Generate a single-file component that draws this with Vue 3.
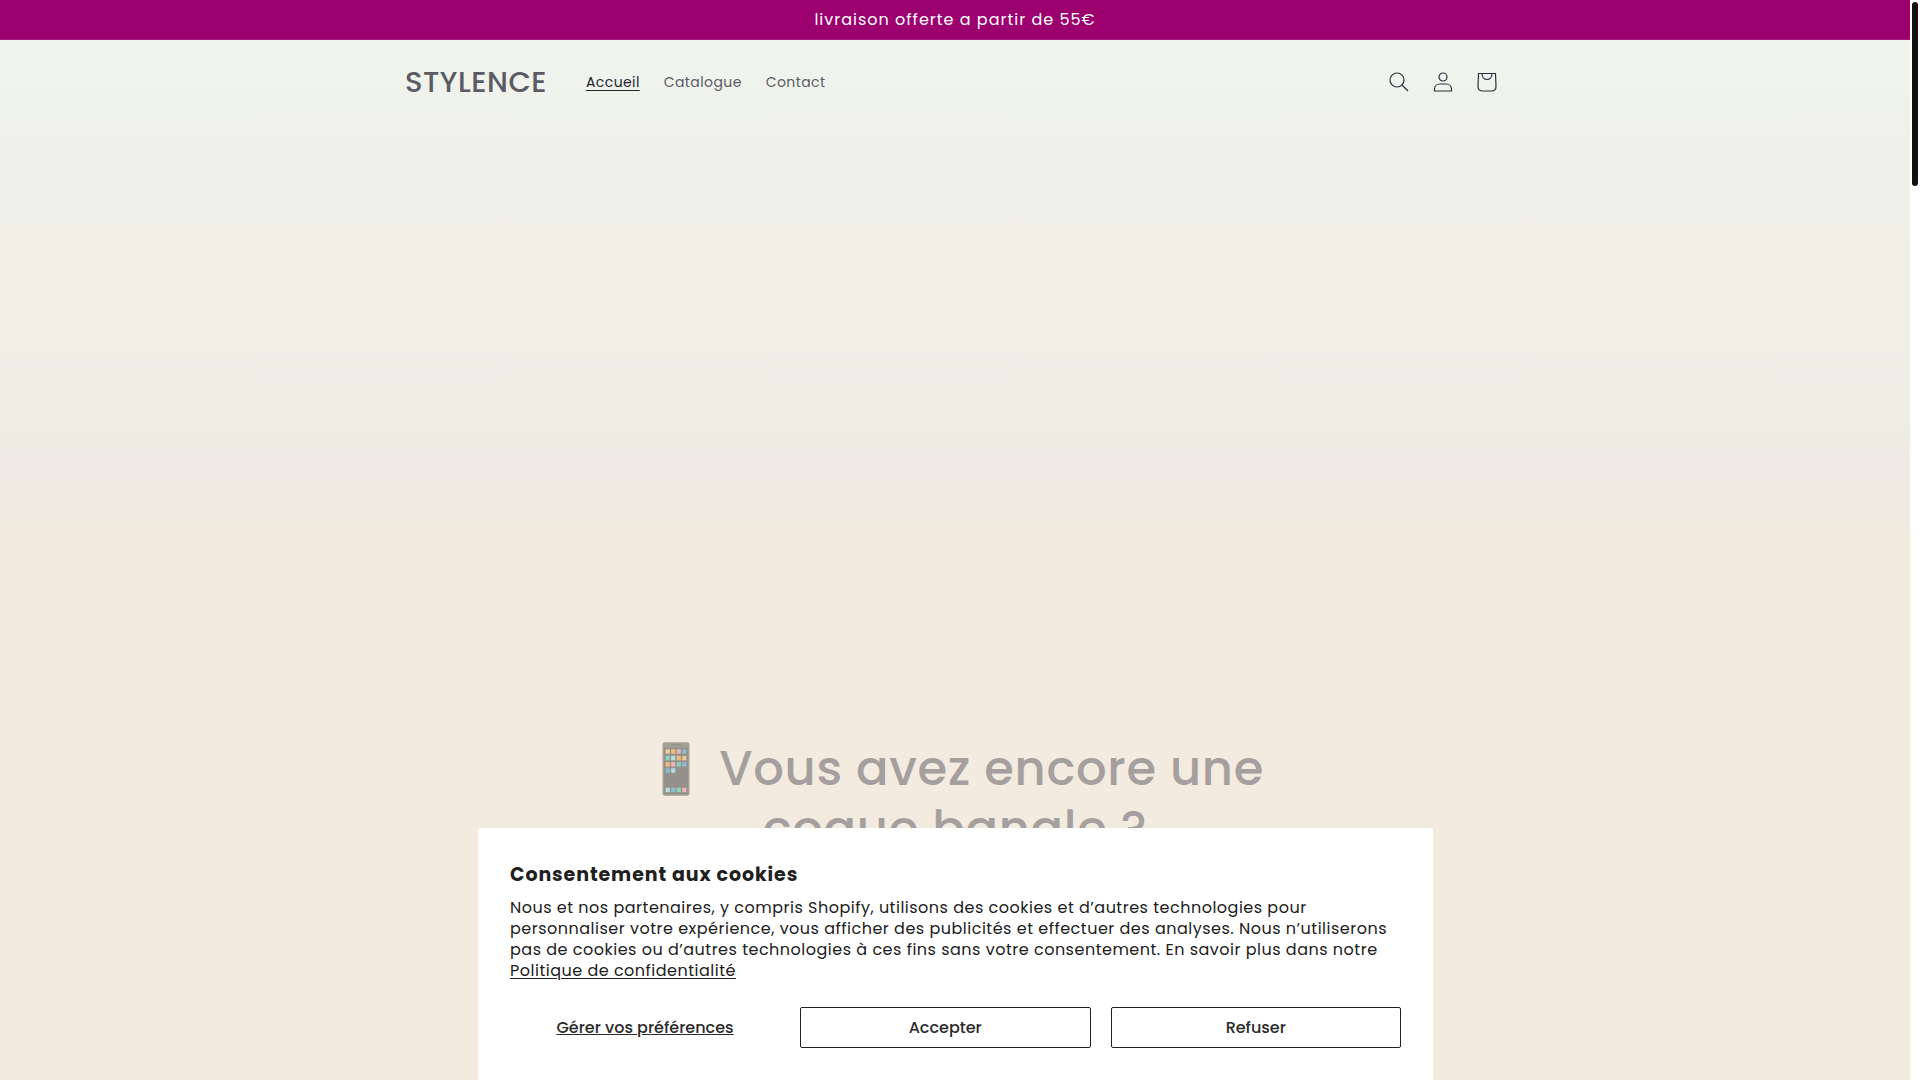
<script setup>
const navLinks = [
  { label: 'Accueil', active: true },
  { label: 'Catalogue', active: false },
  { label: 'Contact', active: false },
]
const appTiles = [
  ['#e9cba0', 10, 21], ['#f2bd78', 26, 21], ['#efb3bd', 42, 21], ['#8bbdd3', 58, 21],
  ['#8bd3bd', 10, 40], ['#b9dbe3', 26, 40], ['#f2bd78', 42, 40], ['#e9cba0', 58, 40],
  ['#f2bd78', 10, 58], ['#efb3bd', 26, 58], ['#8bd3bd', 42, 58], ['#8bbdd3', 58, 58],
  ['#8bbdd3', 10, 76], ['#b9dbe3', 26, 76],
  ['#b9dbe3', 10, 132], ['#8bbdd3', 26, 132], ['#8bd3bd', 42, 132], ['#efb3bd', 58, 132],
]
</script>

<template>
  <div class="page">
    <div class="announcement">
      <p>livraison offerte a partir de 55€</p>
    </div>

    <header class="header">
      <a href="#" class="logo">STYLENCE</a>
      <nav class="nav">
        <a v-for="l in navLinks" :key="l.label" href="#" :class="{ active: l.active }">{{ l.label }}</a>
      </nav>
      <div class="icons">
        <button type="button" aria-label="Recherche">
          <svg viewBox="0 0 20 20" width="20" height="20">
            <circle cx="8" cy="8" r="7" />
            <path d="M13 13l6 6" />
          </svg>
        </button>
        <a href="#" aria-label="Connexion">
          <svg viewBox="0 0 20 20" width="20" height="20">
            <circle cx="10" cy="5" r="4" />
            <path d="M1.500 19v-2c0-3 2.300-5 5.500-5h6c3.200 0 5.500 2 5.500 5v2z" />
          </svg>
        </a>
        <a href="#" aria-label="Panier">
          <svg viewBox="0 0 20 20" width="20" height="20">
            <path d="M1.500 1.500h17l.5 13c0 3-2 4.500-4.500 4.500h-9C3 19 1 17.500 1 14.500z" />
            <path d="M5 1.500c0 3.500 2 6 5 6s5-2.500 5-6" />
          </svg>
        </a>
      </div>
    </header>

    <main class="hero">
      <h1>
        <svg class="phone" viewBox="0 0 80 156" role="img" aria-label="Téléphone">
          <rect x="1" y="1" width="78" height="154" rx="6" fill="#a3a097" />
          <rect x="5" y="17" width="70" height="134" fill="#94918a" />
          <rect x="26" y="6" width="28" height="4" rx="2" fill="#94918a" />
          <rect v-for="(t, i) in appTiles" :key="i" :x="t[1]" :y="t[2]" width="12" height="13" :fill="t[0]" />
        </svg>
        Vous avez encore une<br />coque banale ?
      </h1>
    </main>

    <section class="consent" role="dialog" aria-labelledby="consent-title">
      <h2 id="consent-title">Consentement aux cookies</h2>
      <p>
        Nous et nos partenaires, y compris Shopify, utilisons des cookies et d’autres technologies pour
        personnaliser votre expérience, vous afficher des publicités et effectuer des analyses. Nous n’utiliserons
        pas de cookies ou d’autres technologies à ces fins sans votre consentement. En savoir plus dans notre
        <a href="#">Politique de confidentialité</a>
      </p>
      <div class="actions">
        <button type="button" class="manage">Gérer vos préférences</button>
        <button type="button">Accepter</button>
        <button type="button">Refuser</button>
      </div>
    </section>

    <div class="scrollbar"><div class="thumb"></div></div>
  </div>
</template>

<style>
html {
  font-size: 10px;
}
body {
  overflow: hidden;
}
</style>

<style scoped>
.page {
  --ink: #202020;
  --track-body: 0.05rem;
  --track-heading: 0.07rem;
  min-height: 100vh;
  padding-right: 10px;
  box-sizing: border-box;
  background: linear-gradient(
    180deg,
    #eff5ee 40px,
    #eff0e8 160px,
    #f0efe6 300px,
    #efebe4 480px,
    #efebe0 484px,
    #f0ebe0 526px,
    #f3eae0 532px
  );
  font-family: Poppins, Inter, sans-serif;
  color: #5b5a65;
}
.announcement {
  height: 39px;
  background: #9b006e;
  border-bottom: 1px solid #a31a7c;
  display: flex;
  align-items: center;
  justify-content: center;
  color: #fff;
}
.announcement p {
  margin: 0;
  font-size: 16px;
  letter-spacing: 1px;
}
.header {
  max-width: 1100px;
  height: 84px;
  margin: 0 auto;
  display: flex;
  align-items: center;
}
.logo {
  font-size: 29px;
  font-weight: 500;
  letter-spacing: var(--track-body);
  color: inherit;
  text-decoration: none;
}
.nav {
  display: flex;
  gap: 24px;
  margin-left: 39px;
}
.nav a {
  font-size: 14px;
  letter-spacing: 0.04rem;
  color: inherit;
  text-decoration: none;
}
.nav .active {
  color: #242433;
  text-decoration: underline;
  text-underline-offset: 3px;
}
.icons {
  display: flex;
  margin-left: auto;
  margin-right: -4px;
}
.icons a,
.icons button {
  width: 44px;
  height: 44px;
  padding: 0;
  border: 0;
  background: none;
  display: flex;
  align-items: center;
  justify-content: center;
}
.icons svg {
  fill: none;
  stroke: #2f2e40;
  stroke-width: 1.2;
}
.hero {
  padding-top: 615px;
}
h1 {
  margin: 0;
  text-align: center;
  font-size: 48px;
  line-height: 60px;
  font-weight: 500;
  letter-spacing: var(--track-heading);
  color: #a5a09f;
}
.phone {
  width: 28px;
  height: 54px;
  margin: 0 16px;
  vertical-align: -11px;
}
.consent {
  position: fixed;
  bottom: 0;
  left: calc(25% - 2px);
  right: calc(25% + 7px);
  padding: 33px 32px 32px;
  box-sizing: border-box;
  background: #fff;
  border-radius: 3px 3px 0 0;
  color: var(--ink);
}
h2 {
  margin: 0 0 8px;
  font-size: 19px;
  line-height: 28px;
  font-weight: 700;
  letter-spacing: 0.09rem;
}
.consent p {
  margin: 0;
  font-size: 16px;
  line-height: 21px;
  letter-spacing: var(--track-body);
}
.consent p a {
  color: inherit;
  text-underline-offset: 2px;
}
.actions {
  display: grid;
  grid-template-columns: 270px 1fr 1fr;
  column-gap: 20px;
  margin-top: 26px;
}
.actions button {
  height: 41px;
  border: 1px solid var(--ink);
  border-radius: 2px;
  background: #fff;
  color: #2b2b2b;
  font: inherit;
  font-size: 16px;
  font-weight: 500;
}
.actions .manage {
  border-color: transparent;
  text-decoration: underline;
}
.scrollbar {
  position: fixed;
  top: 0;
  right: 0;
  width: 10px;
  height: 100%;
  background: #fff;
}
.thumb {
  width: 6px;
  height: 17%;
  margin: 2px;
  border-radius: 3px;
  background: #111;
}
</style>
